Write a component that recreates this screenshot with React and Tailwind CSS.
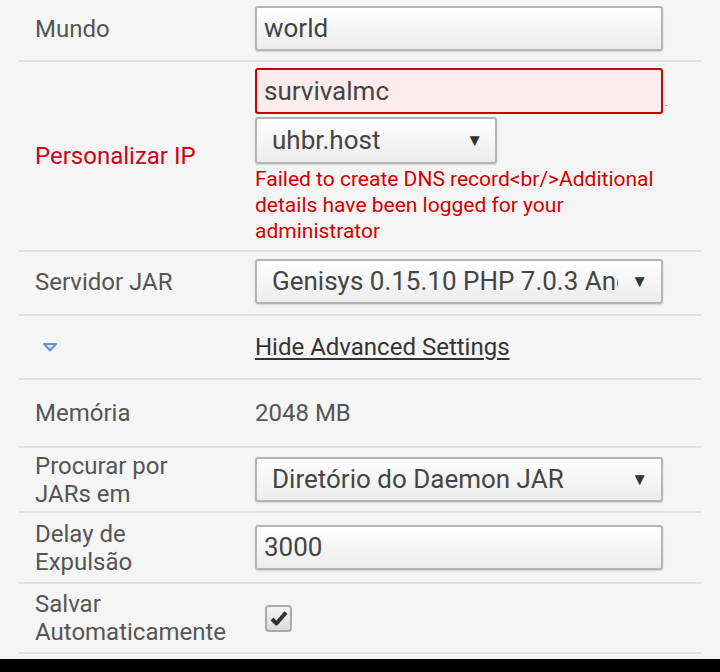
export default function App() {
  const font = { fontFamily: "Roboto, 'Noto Sans', sans-serif" };
  const field = "h-[45px] w-[408px] rounded-[3px] border-2 border-[#b4b4b4] bg-gradient-to-b from-white to-[#ececec] shadow-[0_1px_2px_rgba(0,0,0,0.15)] flex items-center text-[26px] text-[#444]";
  const select = field + " justify-between pl-[15px] pr-[13px]";
  const label = "w-[236px] pl-[16px] text-[24px] leading-[28px] text-[#555]";
  const arrow = <span className="text-[17px] text-[#333]">▼</span>;

  return (
    <div className="h-[672px] w-[720px] overflow-hidden bg-[#f5f5f5] flex flex-col" style={font}>
      <div className="flex-1 overflow-hidden px-[19px]">
        {/* Mundo */}
        <div className="flex items-center border-b-2 border-[#e0e0e0] pt-[6px] pb-[9px]">
          <div className={label}>Mundo</div>
          <div className={field + " pl-[7px]"}>world</div>
        </div>

        {/* Personalizar IP */}
        <div className="flex items-center border-b-2 border-[#e0e0e0] pt-[6px] pb-[6px]">
          <div className={label + " !text-[#d0021b]"}>Personalizar IP</div>
          <div className="flex flex-col">
            <div className="flex items-end">
              <div className="h-[46px] w-[408px] rounded-[3px] border-2 border-[#c00] bg-[#fdecec] flex items-center pl-[7px] text-[26px] text-[#444]">survivalmc</div>
              <span className="ml-[2px] text-[10px] leading-none pb-[6px] text-[#555]">.</span>
            </div>
            <div className="mt-[3px] h-[47px] w-[242px] rounded-[3px] border-2 border-[#b4b4b4] bg-gradient-to-b from-white to-[#ececec] shadow-[0_1px_2px_rgba(0,0,0,0.15)] flex items-center justify-between pl-[15px] pr-[12px] text-[26px] text-[#444]">
              <span>uhbr.host</span>
              {arrow}
            </div>
            <div className="mt-[2px] w-[410px] text-[21px] leading-[26px] text-[#d40000]">
              Failed to create DNS record&lt;br/&gt;Additional details have been logged for your administrator
            </div>
          </div>
        </div>

        {/* Servidor JAR */}
        <div className="flex items-center border-b-2 border-[#e0e0e0] pt-[7px] pb-[10px]">
          <div className={label}>Servidor JAR</div>
          <div className={select}>
            <span className="overflow-hidden whitespace-nowrap w-[346px] shrink-0">Genisys 0.15.10 PHP 7.0.3 Android</span>
            {arrow}
          </div>
        </div>

        {/* Advanced toggle */}
        <div className="flex items-center border-b-2 border-[#e0e0e0] h-[64px]">
          <div className="w-[236px] pl-[23px]">
            <svg width="16" height="10" viewBox="0 0 16 10">
              <path d="M2 2 L14 2 L8 8.5 Z" fill="#dbe6f7" stroke="#6f8fd0" strokeWidth="2" strokeLinejoin="round" />
            </svg>
          </div>
          <a className="text-[24px] text-[#333] underline underline-offset-[3px]">Hide Advanced Settings</a>
        </div>

        {/* Memoria */}
        <div className="flex items-center border-b-2 border-[#e0e0e0] h-[68px]">
          <div className={label}>Memória</div>
          <div className="text-[24px] text-[#555]">2048 MB</div>
        </div>

        {/* Procurar */}
        <div className="flex items-center border-b-2 border-[#e0e0e0] h-[65px]">
          <div className={label}>Procurar por<br />JARs em</div>
          <div className={select}>
            <span>Diretório do Daemon JAR</span>
            {arrow}
          </div>
        </div>

        {/* Delay */}
        <div className="flex items-center border-b-2 border-[#e0e0e0] h-[71px]">
          <div className={label}>Delay de<br />Expulsão</div>
          <div className={field + " pl-[7px]"}>3000</div>
        </div>

        {/* Salvar */}
        <div className="flex items-center border-b-2 border-[#e0e0e0] h-[70px]">
          <div className={label}>Salvar<br />Automaticamente</div>
          <div className="ml-[10px] h-[27px] w-[27px] rounded-[4px] border-2 border-[#aaa] bg-gradient-to-b from-[#f4f4f4] to-[#dcdcdc] flex items-center justify-center">
            <svg width="18" height="16" viewBox="0 0 18 16">
              <path d="M2 9 L6.5 13.5 L16 2.5" fill="none" stroke="#333" strokeWidth="4" strokeLinejoin="round" />
            </svg>
          </div>
        </div>

        <div className="pt-[4px] pl-[16px] text-[24px] text-[#555]">Autoiniciar</div>
      </div>
      <div className="h-[13px] bg-black" />
    </div>
  );
}
